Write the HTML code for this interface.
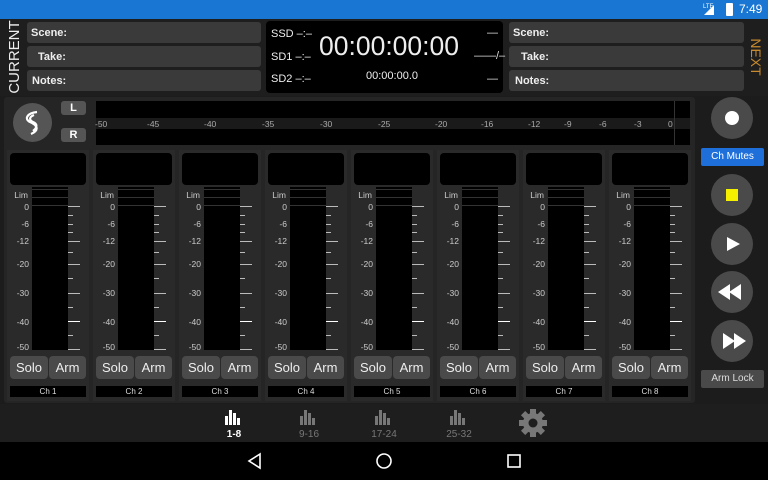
<!DOCTYPE html>
<html><head><meta charset="utf-8"><style>
*{margin:0;padding:0;box-sizing:border-box}
body{width:768px;height:480px;overflow:hidden;background:#1c1c1c;font-family:"Liberation Sans",sans-serif;position:relative;color:#fff}
.a{position:absolute}
.fld{position:absolute;background:#3a3a3a;border-radius:3px;height:21px;font-size:11px;font-weight:bold;padding:5px 0 0 4px;color:#eee}
.strip{position:absolute;top:150px;width:82px;height:251px;background:#2a2a2a}
.box{position:absolute;left:3px;top:3px;width:76px;height:32px;background:#000;border-radius:4px}
.met{position:absolute;left:25px;top:37px;width:36px;height:163px;background:#000}
.lim{position:absolute;left:25px;top:39px;width:36px;height:1px;background:#333}
.lab{position:absolute;font-size:8.5px;color:#ccc;width:22px;text-align:right;left:0}
.tk{position:absolute;left:61px;height:1px;background:#bbb}
.btn{position:absolute;top:206px;height:23px;background:#4a4a4a;border-radius:4px;font-size:13px;color:#eee;text-align:center;line-height:23px}
.chl{position:absolute;left:3px;top:236px;width:76px;height:11px;background:#000;font-size:8px;text-align:center;line-height:11px;color:#ddd}
.sc{position:absolute;top:119px;font-size:8.5px;color:#aaa}
.circ{position:absolute;left:711px;width:42px;height:42px;border-radius:50%;background:#4a4a4a}
.nav{position:absolute;top:429px;font-size:10px;color:#777;text-align:center;width:40px}
</style></head><body>
<div class="a" style="left:0;top:0;width:768px;height:19px;background:#1976d2"></div>
<div class="a" style="left:703px;top:4px;font-size:6px;color:#fff">LTE</div>
<div class="a" style="left:704px;top:5px;width:0;height:0;border-left:10px solid transparent;border-bottom:10px solid #fff"></div>
<div class="a" style="left:726px;top:3px;width:7px;height:13px;background:#fff;border-radius:1px"></div>
<div class="a" style="left:739px;top:2px;font-size:12px;color:#fff">7:49</div>

<div class="a" style="left:0;top:19px;width:768px;height:77px;background:#1e1e1e"></div>
<div class="a" style="left:-26px;top:49px;width:80px;height:16px;transform:rotate(-90deg);font-size:15px;color:#eee;text-align:center">CURRENT</div>
<div class="fld" style="left:27px;top:22px;width:234px">Scene:</div>
<div class="fld" style="left:27px;top:46px;width:234px;padding-left:11px">Take:</div>
<div class="fld" style="left:27px;top:70px;width:234px;padding-left:5px">Notes:</div>
<div class="a" style="left:266px;top:21px;width:237px;height:72px;background:#000;border-radius:4px"></div>
<div class="a" style="left:271px;top:28px;font-size:11px;color:#eee">SSD –:–</div>
<div class="a" style="left:271px;top:51px;font-size:11px;color:#eee">SD1 –:–</div>
<div class="a" style="left:271px;top:73px;font-size:11px;color:#eee">SD2 –:–</div>
<div class="a" style="left:319px;top:31px;font-size:26.5px;color:#eee">00:00:00:00</div>
<div class="a" style="left:366px;top:70px;font-size:11px;color:#eee">00:00:00.0</div>
<div class="a" style="left:487px;top:27px;font-size:11px;color:#ddd">—</div>
<div class="a" style="left:474px;top:50px;font-size:11px;color:#ddd">——/–</div>
<div class="a" style="left:487px;top:73px;font-size:11px;color:#ddd">—</div>
<div class="fld" style="left:509px;top:22px;width:235px">Scene:</div>
<div class="fld" style="left:509px;top:46px;width:235px;padding-left:12px">Take:</div>
<div class="fld" style="left:509px;top:70px;width:235px;padding-left:6px">Notes:</div>
<div class="a" style="left:726px;top:49px;width:60px;height:16px;transform:rotate(90deg);font-size:14px;color:#c88a2e;text-align:center">NEXT</div>

<div class="a" style="left:4px;top:97px;width:691px;height:306px;background:#252525;border-radius:3px"></div>
<div class="a" style="left:13px;top:103px;width:39px;height:39px;border-radius:50%;background:#555"></div>
<svg class="a" style="left:13px;top:103px" width="39" height="39"><path d="M24 9 C14 10 11 16 17 19 C24 22 27 27 18 31 M21 12 C16 14 16 17 20 19 C25 21 24 25 20 28" stroke="#fff" stroke-width="2.2" fill="none"/></svg>
<div class="a" style="left:61px;top:101px;width:25px;height:14px;background:#555;border-radius:3px;font-size:11px;font-weight:bold;text-align:center;line-height:14px">L</div>
<div class="a" style="left:61px;top:128px;width:25px;height:14px;background:#555;border-radius:3px;font-size:11px;font-weight:bold;text-align:center;line-height:14px">R</div>
<div class="a" style="left:96px;top:101px;width:594px;height:44px;background:#000"></div>
<div class="a" style="left:96px;top:118px;width:594px;height:11px;background:#1a1a1a"></div>
<div class="a" style="left:674px;top:101px;width:1px;height:44px;background:#333"></div>
<div class="sc" style="left:95px">-50</div><div class="sc" style="left:147px">-45</div><div class="sc" style="left:204px">-40</div><div class="sc" style="left:262px">-35</div><div class="sc" style="left:320px">-30</div><div class="sc" style="left:378px">-25</div><div class="sc" style="left:435px">-20</div><div class="sc" style="left:481px">-16</div><div class="sc" style="left:528px">-12</div><div class="sc" style="left:564px">-9</div><div class="sc" style="left:599px">-6</div><div class="sc" style="left:634px">-3</div><div class="sc" style="left:668px">0</div>

<div class="strip" style="left:7px"><div class="box"></div><div class="met"></div><div class="lim"></div><div class="lim" style="top:47px"></div><div class="lim" style="top:55px"></div>
<div class="lab" style="top:40px;left:-1px">Lim</div><div class="lab" style="top:52px">0</div><div class="lab" style="top:69px">-6</div><div class="lab" style="top:86px">-12</div><div class="lab" style="top:109px">-20</div><div class="lab" style="top:138px">-30</div><div class="lab" style="top:167px">-40</div><div class="lab" style="top:192px">-50</div>
<div class="tk" style="top:56px;width:12px"></div><div class="tk" style="top:65px;width:5px"></div><div class="tk" style="top:74px;width:5px"></div><div class="tk" style="top:82px;width:5px"></div><div class="tk" style="top:91px;width:12px"></div><div class="tk" style="top:102px;width:5px"></div><div class="tk" style="top:114px;width:12px"></div><div class="tk" style="top:128px;width:5px"></div><div class="tk" style="top:143px;width:12px"></div><div class="tk" style="top:157px;width:5px"></div><div class="tk" style="top:171px;width:12px;background:#fff"></div><div class="tk" style="top:185px;width:5px"></div><div class="tk" style="top:199px;width:12px"></div>
<div class="btn" style="left:3px;width:38px">Solo</div><div class="btn" style="left:42px;width:37px">Arm</div><div class="chl">Ch 1</div></div>

<div class="strip" style="left:93px"><div class="box"></div><div class="met"></div><div class="lim"></div><div class="lim" style="top:47px"></div><div class="lim" style="top:55px"></div>
<div class="lab" style="top:40px;left:-1px">Lim</div><div class="lab" style="top:52px">0</div><div class="lab" style="top:69px">-6</div><div class="lab" style="top:86px">-12</div><div class="lab" style="top:109px">-20</div><div class="lab" style="top:138px">-30</div><div class="lab" style="top:167px">-40</div><div class="lab" style="top:192px">-50</div>
<div class="tk" style="top:56px;width:12px"></div><div class="tk" style="top:65px;width:5px"></div><div class="tk" style="top:74px;width:5px"></div><div class="tk" style="top:82px;width:5px"></div><div class="tk" style="top:91px;width:12px"></div><div class="tk" style="top:102px;width:5px"></div><div class="tk" style="top:114px;width:12px"></div><div class="tk" style="top:128px;width:5px"></div><div class="tk" style="top:143px;width:12px"></div><div class="tk" style="top:157px;width:5px"></div><div class="tk" style="top:171px;width:12px;background:#fff"></div><div class="tk" style="top:185px;width:5px"></div><div class="tk" style="top:199px;width:12px"></div>
<div class="btn" style="left:3px;width:38px">Solo</div><div class="btn" style="left:42px;width:37px">Arm</div><div class="chl">Ch 2</div></div>

<div class="strip" style="left:179px"><div class="box"></div><div class="met"></div><div class="lim"></div><div class="lim" style="top:47px"></div><div class="lim" style="top:55px"></div>
<div class="lab" style="top:40px;left:-1px">Lim</div><div class="lab" style="top:52px">0</div><div class="lab" style="top:69px">-6</div><div class="lab" style="top:86px">-12</div><div class="lab" style="top:109px">-20</div><div class="lab" style="top:138px">-30</div><div class="lab" style="top:167px">-40</div><div class="lab" style="top:192px">-50</div>
<div class="tk" style="top:56px;width:12px"></div><div class="tk" style="top:65px;width:5px"></div><div class="tk" style="top:74px;width:5px"></div><div class="tk" style="top:82px;width:5px"></div><div class="tk" style="top:91px;width:12px"></div><div class="tk" style="top:102px;width:5px"></div><div class="tk" style="top:114px;width:12px"></div><div class="tk" style="top:128px;width:5px"></div><div class="tk" style="top:143px;width:12px"></div><div class="tk" style="top:157px;width:5px"></div><div class="tk" style="top:171px;width:12px;background:#fff"></div><div class="tk" style="top:185px;width:5px"></div><div class="tk" style="top:199px;width:12px"></div>
<div class="btn" style="left:3px;width:38px">Solo</div><div class="btn" style="left:42px;width:37px">Arm</div><div class="chl">Ch 3</div></div>

<div class="strip" style="left:265px"><div class="box"></div><div class="met"></div><div class="lim"></div><div class="lim" style="top:47px"></div><div class="lim" style="top:55px"></div>
<div class="lab" style="top:40px;left:-1px">Lim</div><div class="lab" style="top:52px">0</div><div class="lab" style="top:69px">-6</div><div class="lab" style="top:86px">-12</div><div class="lab" style="top:109px">-20</div><div class="lab" style="top:138px">-30</div><div class="lab" style="top:167px">-40</div><div class="lab" style="top:192px">-50</div>
<div class="tk" style="top:56px;width:12px"></div><div class="tk" style="top:65px;width:5px"></div><div class="tk" style="top:74px;width:5px"></div><div class="tk" style="top:82px;width:5px"></div><div class="tk" style="top:91px;width:12px"></div><div class="tk" style="top:102px;width:5px"></div><div class="tk" style="top:114px;width:12px"></div><div class="tk" style="top:128px;width:5px"></div><div class="tk" style="top:143px;width:12px"></div><div class="tk" style="top:157px;width:5px"></div><div class="tk" style="top:171px;width:12px;background:#fff"></div><div class="tk" style="top:185px;width:5px"></div><div class="tk" style="top:199px;width:12px"></div>
<div class="btn" style="left:3px;width:38px">Solo</div><div class="btn" style="left:42px;width:37px">Arm</div><div class="chl">Ch 4</div></div>

<div class="strip" style="left:351px"><div class="box"></div><div class="met"></div><div class="lim"></div><div class="lim" style="top:47px"></div><div class="lim" style="top:55px"></div>
<div class="lab" style="top:40px;left:-1px">Lim</div><div class="lab" style="top:52px">0</div><div class="lab" style="top:69px">-6</div><div class="lab" style="top:86px">-12</div><div class="lab" style="top:109px">-20</div><div class="lab" style="top:138px">-30</div><div class="lab" style="top:167px">-40</div><div class="lab" style="top:192px">-50</div>
<div class="tk" style="top:56px;width:12px"></div><div class="tk" style="top:65px;width:5px"></div><div class="tk" style="top:74px;width:5px"></div><div class="tk" style="top:82px;width:5px"></div><div class="tk" style="top:91px;width:12px"></div><div class="tk" style="top:102px;width:5px"></div><div class="tk" style="top:114px;width:12px"></div><div class="tk" style="top:128px;width:5px"></div><div class="tk" style="top:143px;width:12px"></div><div class="tk" style="top:157px;width:5px"></div><div class="tk" style="top:171px;width:12px;background:#fff"></div><div class="tk" style="top:185px;width:5px"></div><div class="tk" style="top:199px;width:12px"></div>
<div class="btn" style="left:3px;width:38px">Solo</div><div class="btn" style="left:42px;width:37px">Arm</div><div class="chl">Ch 5</div></div>

<div class="strip" style="left:437px"><div class="box"></div><div class="met"></div><div class="lim"></div><div class="lim" style="top:47px"></div><div class="lim" style="top:55px"></div>
<div class="lab" style="top:40px;left:-1px">Lim</div><div class="lab" style="top:52px">0</div><div class="lab" style="top:69px">-6</div><div class="lab" style="top:86px">-12</div><div class="lab" style="top:109px">-20</div><div class="lab" style="top:138px">-30</div><div class="lab" style="top:167px">-40</div><div class="lab" style="top:192px">-50</div>
<div class="tk" style="top:56px;width:12px"></div><div class="tk" style="top:65px;width:5px"></div><div class="tk" style="top:74px;width:5px"></div><div class="tk" style="top:82px;width:5px"></div><div class="tk" style="top:91px;width:12px"></div><div class="tk" style="top:102px;width:5px"></div><div class="tk" style="top:114px;width:12px"></div><div class="tk" style="top:128px;width:5px"></div><div class="tk" style="top:143px;width:12px"></div><div class="tk" style="top:157px;width:5px"></div><div class="tk" style="top:171px;width:12px;background:#fff"></div><div class="tk" style="top:185px;width:5px"></div><div class="tk" style="top:199px;width:12px"></div>
<div class="btn" style="left:3px;width:38px">Solo</div><div class="btn" style="left:42px;width:37px">Arm</div><div class="chl">Ch 6</div></div>

<div class="strip" style="left:523px"><div class="box"></div><div class="met"></div><div class="lim"></div><div class="lim" style="top:47px"></div><div class="lim" style="top:55px"></div>
<div class="lab" style="top:40px;left:-1px">Lim</div><div class="lab" style="top:52px">0</div><div class="lab" style="top:69px">-6</div><div class="lab" style="top:86px">-12</div><div class="lab" style="top:109px">-20</div><div class="lab" style="top:138px">-30</div><div class="lab" style="top:167px">-40</div><div class="lab" style="top:192px">-50</div>
<div class="tk" style="top:56px;width:12px"></div><div class="tk" style="top:65px;width:5px"></div><div class="tk" style="top:74px;width:5px"></div><div class="tk" style="top:82px;width:5px"></div><div class="tk" style="top:91px;width:12px"></div><div class="tk" style="top:102px;width:5px"></div><div class="tk" style="top:114px;width:12px"></div><div class="tk" style="top:128px;width:5px"></div><div class="tk" style="top:143px;width:12px"></div><div class="tk" style="top:157px;width:5px"></div><div class="tk" style="top:171px;width:12px;background:#fff"></div><div class="tk" style="top:185px;width:5px"></div><div class="tk" style="top:199px;width:12px"></div>
<div class="btn" style="left:3px;width:38px">Solo</div><div class="btn" style="left:42px;width:37px">Arm</div><div class="chl">Ch 7</div></div>

<div class="strip" style="left:609px"><div class="box"></div><div class="met"></div><div class="lim"></div><div class="lim" style="top:47px"></div><div class="lim" style="top:55px"></div>
<div class="lab" style="top:40px;left:-1px">Lim</div><div class="lab" style="top:52px">0</div><div class="lab" style="top:69px">-6</div><div class="lab" style="top:86px">-12</div><div class="lab" style="top:109px">-20</div><div class="lab" style="top:138px">-30</div><div class="lab" style="top:167px">-40</div><div class="lab" style="top:192px">-50</div>
<div class="tk" style="top:56px;width:12px"></div><div class="tk" style="top:65px;width:5px"></div><div class="tk" style="top:74px;width:5px"></div><div class="tk" style="top:82px;width:5px"></div><div class="tk" style="top:91px;width:12px"></div><div class="tk" style="top:102px;width:5px"></div><div class="tk" style="top:114px;width:12px"></div><div class="tk" style="top:128px;width:5px"></div><div class="tk" style="top:143px;width:12px"></div><div class="tk" style="top:157px;width:5px"></div><div class="tk" style="top:171px;width:12px;background:#fff"></div><div class="tk" style="top:185px;width:5px"></div><div class="tk" style="top:199px;width:12px"></div>
<div class="btn" style="left:3px;width:38px">Solo</div><div class="btn" style="left:42px;width:37px">Arm</div><div class="chl">Ch 8</div></div>

<div class="circ" style="top:97px"></div><div class="a" style="left:725px;top:111px;width:14px;height:14px;border-radius:50%;background:#fff"></div>
<div class="a" style="left:701px;top:148px;width:63px;height:18px;background:#1e6fd9;border-radius:2px;font-size:10px;text-align:center;line-height:18px">Ch Mutes</div>
<div class="circ" style="top:174px"></div><div class="a" style="left:726px;top:189px;width:12px;height:12px;background:#f5f000"></div>
<div class="circ" style="top:223px"></div><svg class="a" style="left:711px;top:223px" width="42" height="42"><path d="M16 14 L29 21 L16 28Z" fill="#fff"/></svg>
<div class="circ" style="top:271px"></div><svg class="a" style="left:711px;top:271px" width="42" height="42"><path d="M7 21 L19 13 L19 29Z M18 21 L30 13 L30 29Z" fill="#fff"/></svg>
<div class="circ" style="top:320px"></div><svg class="a" style="left:711px;top:320px" width="42" height="42"><path d="M12 13 L24 21 L12 29Z M23 13 L35 21 L23 29Z" fill="#fff"/></svg>
<div class="a" style="left:701px;top:370px;width:63px;height:18px;background:#4a4a4a;border-radius:2px;font-size:10px;text-align:center;line-height:18px;color:#ddd">Arm Lock</div>

<div class="a" style="left:0;top:404px;width:768px;height:38px;background:#1e1e1e"></div>
<svg class="a" style="left:224px;top:408px" width="20" height="18"><g fill="#fff"><rect x="1" y="8" width="3" height="9"/><rect x="5" y="2" width="3" height="15"/><rect x="9" y="5" width="3" height="12"/><rect x="13" y="10" width="3" height="7"/></g></svg>
<svg class="a" style="left:299px;top:408px" width="20" height="18"><g fill="#777"><rect x="1" y="8" width="3" height="9"/><rect x="5" y="2" width="3" height="15"/><rect x="9" y="5" width="3" height="12"/><rect x="13" y="10" width="3" height="7"/></g></svg>
<svg class="a" style="left:374px;top:408px" width="20" height="18"><g fill="#777"><rect x="1" y="8" width="3" height="9"/><rect x="5" y="2" width="3" height="15"/><rect x="9" y="5" width="3" height="12"/><rect x="13" y="10" width="3" height="7"/></g></svg>
<svg class="a" style="left:449px;top:408px" width="20" height="18"><g fill="#777"><rect x="1" y="8" width="3" height="9"/><rect x="5" y="2" width="3" height="15"/><rect x="9" y="5" width="3" height="12"/><rect x="13" y="10" width="3" height="7"/></g></svg>
<div class="nav" style="left:214px;color:#fff;font-weight:bold">1-8</div>
<div class="nav" style="left:289px">9-16</div>
<div class="nav" style="left:364px">17-24</div>
<div class="nav" style="left:439px">25-32</div>
<svg class="a" style="left:518px;top:408px" width="30" height="30"><g fill="#777" transform="translate(15 15)"><circle r="10"/><rect x="-3" y="-14" width="6" height="28"/><rect x="-3" y="-14" width="6" height="28" transform="rotate(45)"/><rect x="-3" y="-14" width="6" height="28" transform="rotate(90)"/><rect x="-3" y="-14" width="6" height="28" transform="rotate(135)"/><circle r="4.5" fill="#1e1e1e"/></g></svg>

<div class="a" style="left:0;top:442px;width:768px;height:38px;background:#000"></div>
<svg class="a" style="left:240px;top:450px" width="300" height="22"><path d="M20 4 L9 11 L20 18Z" stroke="#fff" stroke-width="1.6" fill="none"/><circle cx="144" cy="11" r="7" stroke="#fff" stroke-width="1.6" fill="none"/><rect x="268" y="5" width="12" height="12" stroke="#fff" stroke-width="1.6" fill="none"/></svg>
</body></html>
